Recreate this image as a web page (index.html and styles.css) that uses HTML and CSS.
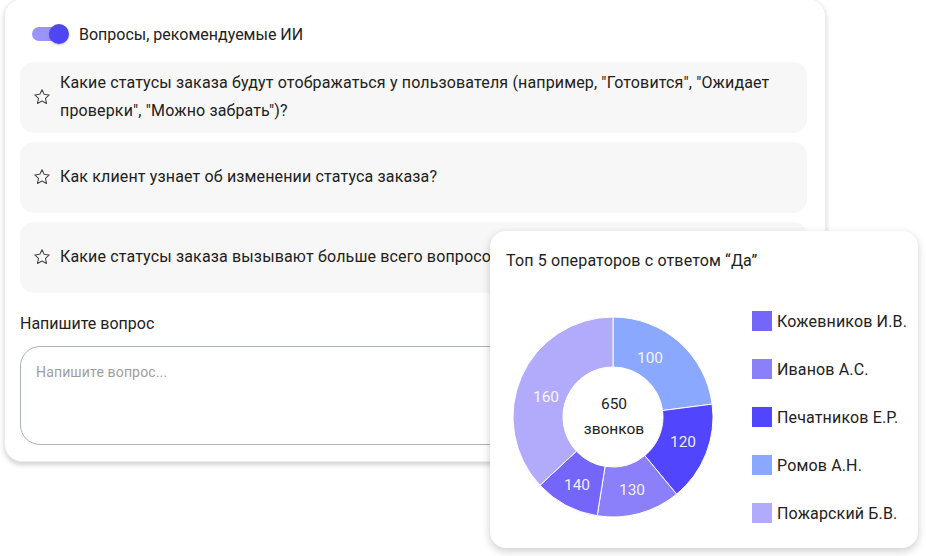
FILE: index.html
```html
<!DOCTYPE html>
<html lang="ru">
<head>
    <meta charset="UTF-8">
    <title>Вопросы</title>
    <link rel="stylesheet" href="styles.css">
</head>
<body>
    <div class="questions-card">
        <div class="ai-toggle">
            <span class="switch"><span class="switch-track"></span><span class="switch-knob"></span></span>
            <span>Вопросы, рекомендуемые ИИ</span>
        </div>
        <div class="question-list">
            <div class="question">
                <svg class="star" viewBox="0 0 24 24"><path d="M12 3.2l2.6 5.6 6.1.7-4.5 4.2 1.2 6.1L12 16.8l-5.4 3 1.2-6.1-4.5-4.2 6.1-.7z"/></svg>
                <p>Какие статусы заказа будут отображаться у пользователя (например, "Готовится", "Ожидает проверки", "Можно забрать")?</p>
            </div>
            <div class="question">
                <svg class="star" viewBox="0 0 24 24"><path d="M12 3.2l2.6 5.6 6.1.7-4.5 4.2 1.2 6.1L12 16.8l-5.4 3 1.2-6.1-4.5-4.2 6.1-.7z"/></svg>
                <p>Как клиент узнает об изменении статуса заказа?</p>
            </div>
            <div class="question">
                <svg class="star" viewBox="0 0 24 24"><path d="M12 3.2l2.6 5.6 6.1.7-4.5 4.2 1.2 6.1L12 16.8l-5.4 3 1.2-6.1-4.5-4.2 6.1-.7z"/></svg>
                <p>Какие статусы заказа вызывают больше всего вопросов у клиентов?</p>
            </div>
        </div>
        <label class="ask-label" for="ask">Напишите вопрос</label>
        <textarea id="ask" class="ask-input" placeholder="Напишите вопрос..."></textarea>
    </div>

    <div class="chart-card">
        <div class="chart-title">Топ 5 операторов с ответом “Да”</div>
        <div class="chart-body">
            <svg class="donut" width="200" height="200" viewBox="0 0 200 200">
                <g stroke="#fff" stroke-width="1">
                    <path fill="#8aa8fe" d="M100 0 A100 100 0 0 1 199.17 87.12 L149.58 93.56 A50 50 0 0 0 100 50 Z"/>
                    <path fill="#5145fd" d="M199.17 87.12 A100 100 0 0 1 163.61 177.16 L131.80 138.58 A50 50 0 0 0 149.58 93.56 Z"/>
                    <path fill="#8b80fa" d="M163.61 177.16 A100 100 0 0 1 84.18 198.74 L92.09 149.37 A50 50 0 0 0 131.80 138.58 Z"/>
                    <path fill="#7566fa" d="M84.18 198.74 A100 100 0 0 1 26.96 168.30 L63.48 134.15 A50 50 0 0 0 92.09 149.37 Z"/>
                    <path fill="#b2abfc" d="M26.96 168.30 A100 100 0 0 1 100 0 L100 50 A50 50 0 0 0 63.48 134.15 Z"/>
                </g>
                <g class="slice-labels">
                    <text x="137" y="41">100</text>
                    <text x="170" y="125">120</text>
                    <text x="119" y="173">130</text>
                    <text x="64" y="168">140</text>
                    <text x="33" y="80">160</text>
                </g>
                <text class="donut-total" x="101" y="87">650</text>
                <text class="donut-total" x="101" y="112">звонков</text>
            </svg>
            <ul class="legend">
                <li><span class="swatch" style="background:#7566fa"></span>Кожевников И.В.</li>
                <li><span class="swatch" style="background:#8b80fa"></span>Иванов А.С.</li>
                <li><span class="swatch" style="background:#5145fd"></span>Печатников Е.Р.</li>
                <li><span class="swatch" style="background:#8aa8fe"></span>Ромов А.Н.</li>
                <li><span class="swatch" style="background:#b2abfc"></span>Пожарский Б.В.</li>
            </ul>
        </div>
    </div>
</body>
</html>
```

FILE: styles.css
```css
body, html {
    margin: 0;
    padding: 0;
    height: 100%;
    background: #fff;
    font-family: Roboto, "Liberation Sans", sans-serif;
    color: #212121;
    overflow: hidden;
}
.questions-card {
    box-sizing: border-box;
    width: 822px;
    height: 464px;
    margin: -2px 0 0 4px;
    padding: 25px 18px 16px 15px;
    background: #fff;
    border: 1px solid #ececec;
    border-radius: 18px;
    box-shadow: 0 3px 5px rgba(0, 0, 0, 0.18);
    display: flex;
    flex-direction: column;
}
.ai-toggle {
    display: flex;
    align-items: center;
    gap: 10px;
    height: 20px;
    font-size: 16px;
    color: #222;
}
.switch {
    position: relative;
    width: 37px;
    height: 20px;
    margin-left: 12px;
}
.switch-track {
    position: absolute;
    left: 0;
    top: 3px;
    width: 32px;
    height: 14px;
    border-radius: 7px;
    background: #9a93f8;
}
.switch-knob {
    position: absolute;
    right: 0;
    top: 0;
    width: 20px;
    height: 20px;
    border-radius: 50%;
    background: #4f46f2;
    box-shadow: 0 1px 2px rgba(0, 0, 0, 0.25);
}
.question-list {
    display: flex;
    flex-direction: column;
    gap: 9px;
    margin-top: 18px;
}
.question {
    box-sizing: border-box;
    min-height: 71px;
    padding: 7px 22px 8px 12px;
    display: flex;
    align-items: center;
    gap: 8px;
    background: #f7f7f7;
    border-radius: 14px;
    overflow: hidden;
}
.question p {
    margin: 0;
    font-size: 16px;
    line-height: 28px;
    letter-spacing: 0.15px;
}
.question:last-child p {
    white-space: nowrap;
}
.star {
    flex: none;
    width: 20px;
    height: 20px;
    fill: none;
    stroke: #4a4a4a;
    stroke-width: 1.3;
    stroke-linejoin: round;
}
.ask-label {
    margin-top: 19px;
    font-size: 16px;
    line-height: 24px;
    color: #222;
}
.ask-input {
    box-sizing: border-box;
    margin-top: 10px;
    height: 100px;
    padding: 17px 15px;
    border: 1px solid #a9b4c0;
    border-radius: 20px;
    font-family: Roboto, "Liberation Sans", sans-serif;
    font-size: 14px;
    letter-spacing: 0.15px;
    resize: none;
    outline: none;
}
.ask-input::placeholder {
    color: #9e9e9e;
}
.chart-card {
    position: absolute;
    left: 490px;
    top: 231px;
    width: 428px;
    height: 317px;
    box-sizing: border-box;
    background: #fff;
    border-radius: 16px;
    box-shadow: 0 3px 8px rgba(0, 0, 0, 0.2);
    padding: 20px 0 0 16px;
}
.chart-title {
    font-size: 16px;
    line-height: 20px;
    letter-spacing: 0.15px;
    color: #222;
}
.chart-body {
    display: flex;
    align-items: flex-start;
    margin-top: 40px;
    padding-left: 7px;
}
.donut {
    margin-top: 6px;
    flex: none;
}
.slice-labels text {
    fill: #fff;
    fill-opacity: 0.92;
    font-size: 15.5px;
    text-anchor: middle;
    dominant-baseline: central;
}
.donut-total {
    fill: #222;
    font-size: 15.5px;
    text-anchor: middle;
    dominant-baseline: central;
}
.legend {
    list-style: none;
    margin: 0 0 0 39px;
    padding: 0;
    display: flex;
    flex-direction: column;
    gap: 28px;
}
.legend li {
    display: flex;
    align-items: center;
    gap: 5px;
    height: 20px;
    font-size: 16px;
    letter-spacing: 0.15px;
    color: #222;
    white-space: nowrap;
}
.swatch {
    width: 20px;
    height: 20px;
}
```
